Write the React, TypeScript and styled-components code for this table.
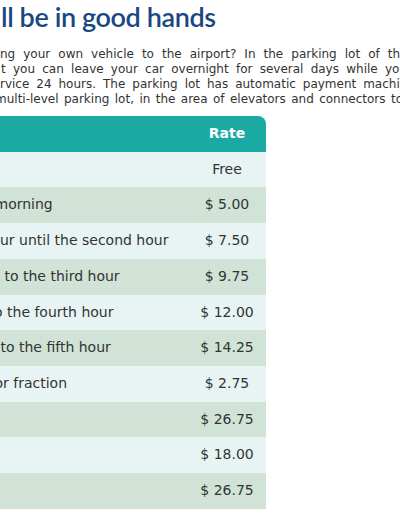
import React from "react";
import styled, { createGlobalStyle } from "styled-components";

const GlobalStyle = createGlobalStyle`
  html, body {
    margin: 0;
    padding: 0;
    background: #ffffff;
  }
  body {
    width: 400px;
    height: 516px;
    overflow: hidden;
  }
`;

const Page = styled.div`
  width: 400px;
  height: 516px;
  overflow: hidden;
  display: flex;
  flex-direction: column;
`;

const Title = styled.h2`
  margin: 0 0 0 1px;
  font-family: "Lato", "Open Sans", sans-serif;
  font-weight: 600;
  font-size: 27px;
  line-height: 34px;
  letter-spacing: -0.4px;
  color: #1a4783;
  white-space: nowrap;
`;

const Intro = styled.div`
  margin-top: 12.5px;
  font-family: "DejaVu Sans", Verdana, sans-serif;
  font-size: 12px;
  line-height: 15.3px;
  color: #333333;
`;

const Line = styled.span<{ $start: number; $end: number }>`
  display: block;
  margin-left: ${(p) => p.$start}px;
  width: ${(p) => p.$end - p.$start}px;
  text-align: justify;
  text-align-last: justify;
`;

const Table = styled.table`
  margin-top: 8.3px;
  width: 266px;
  border-collapse: separate;
  border-spacing: 0;
  font-family: "DejaVu Sans", Verdana, sans-serif;
  font-size: 14px;
  color: #333333;
`;

const HeadCell = styled.th<{ $rate?: boolean }>`
  background: #1ba9a4;
  color: #ffffff;
  font-weight: 700;
  padding: 9px 0;
  line-height: 17.7px;
  text-align: ${(p) => (p.$rate ? "center" : "left")};
  width: ${(p) => (p.$rate ? "78px" : "auto")};
  border-top-right-radius: ${(p) => (p.$rate ? "8px" : "0")};
`;

const Row = styled.tr<{ $shade: boolean }>`
  background: ${(p) => (p.$shade ? "#d0e3d6" : "#e8f4f3")};
`;

const LabelCell = styled.td<{ $shift: number }>`
  padding: 9px 0;
  line-height: 17.7px;
  text-align: left;
  text-indent: ${(p) => p.$shift}px;
  white-space: nowrap;
`;

const RateCell = styled.td`
  padding: 9px 0;
  line-height: 17.7px;
  width: 78px;
  text-align: center;
  white-space: nowrap;
`;

const lines = [
  { text: "ng your own vehicle to the airport? In the parking lot of the", start: 0, end: 407.5 },
  { text: "t you can leave your car overnight for several days while you", start: 1, end: 407 },
  { text: "rvice 24 hours. The parking lot has automatic payment machines", start: 0, end: 421 },
  { text: "multi-level parking lot, in the area of elevators and connectors to", start: -5, end: 403 },
];

const rates = [
  { label: "", shift: 0, rate: "Free" },
  { label: "morning", shift: -5.5, rate: "$ 5.00" },
  { label: "ur until the second hour", shift: 0, rate: "$ 7.50" },
  { label: "to the third hour", shift: 4.5, rate: "$ 9.75" },
  { label: "o the fourth hour", shift: -6, rate: "$ 12.00" },
  { label: "to the fifth hour", shift: 0.5, rate: "$ 14.25" },
  { label: "or fraction", shift: -5.5, rate: "$ 2.75" },
  { label: "", shift: 0, rate: "$ 26.75" },
  { label: "", shift: 0, rate: "$ 18.00" },
  { label: "", shift: 0, rate: "$ 26.75" },
];

export default function App() {
  return (
    <>
      <GlobalStyle />
      <Page>
        <Title>ll be in good hands</Title>
        <Intro>
          {lines.map((l, i) => (
            <Line key={i} $start={l.start} $end={l.end}>
              {l.text}
            </Line>
          ))}
        </Intro>
        <Table>
          <thead>
            <tr>
              <HeadCell />
              <HeadCell $rate>Rate</HeadCell>
            </tr>
          </thead>
          <tbody>
            {rates.map((r, i) => (
              <Row key={i} $shade={i % 2 === 1}>
                <LabelCell $shift={r.shift}>{r.label}</LabelCell>
                <RateCell>{r.rate}</RateCell>
              </Row>
            ))}
          </tbody>
        </Table>
      </Page>
    </>
  );
}
